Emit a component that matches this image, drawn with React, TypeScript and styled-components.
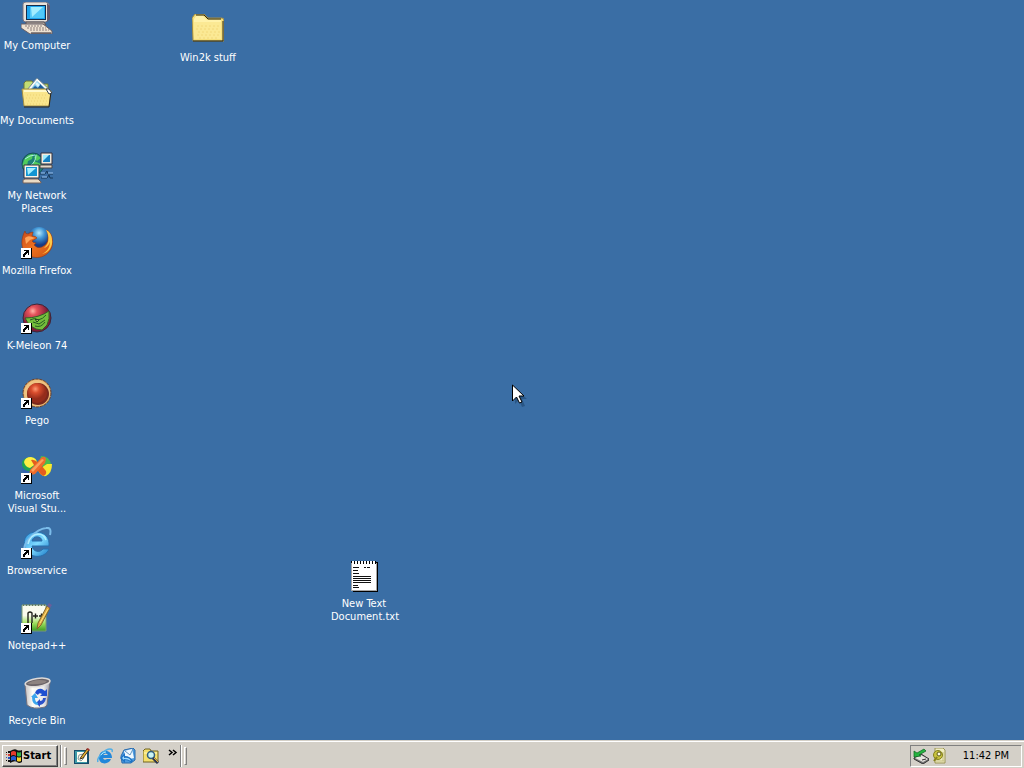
import React from "react";
import styled, { createGlobalStyle } from "styled-components";

const GlobalStyle = createGlobalStyle`
  * { box-sizing: border-box; }
  body {
    margin: 0;
    font-family: Tahoma, "DejaVu Sans Condensed", "DejaVu Sans", sans-serif;
    font-size: 11px;
    line-height: 13px;
  }
`;

const Screen = styled.div`
  display: flex;
  flex-direction: column;
  min-height: 100vh;
  background: #3a6ea5;
`;

const Desktop = styled.main`
  position: relative;
  flex: 1;
  overflow: hidden;
`;

const IconColumn = styled.div`
  display: grid;
  grid-auto-rows: 75px;
  width: 74px;
  padding-top: 2px;
  margin-bottom: -16px;
`;

const Shortcut = styled.button`
  display: flex;
  flex-direction: column;
  align-items: center;
  gap: 5px;
  width: 74px;
  padding: 0;
  border: 0;
  background: none;
  color: #fff;
  font: inherit;
  text-align: center;
  svg { flex: none; display: block; }
`;

const Label = styled.span<{ $narrow?: boolean }>`
  width: ${(p) => (p.$narrow ? "66px" : "auto")};
  white-space: ${(p) => (p.$narrow ? "normal" : "nowrap")};
`;

const Placed = styled.div<{ $x: number; $y: number }>`
  position: absolute;
  left: ${(p) => p.$x}px;
  top: ${(p) => p.$y}px;
`;

const Pointer = styled.svg`
  position: absolute;
  left: 50%;
  top: 384px;
  pointer-events: none;
`;

const Taskbar = styled.footer`
  display: flex;
  align-items: center;
  height: 28px;
  padding: 3px 2px 1px;
  background: #d4d0c8;
  border-top: 1px solid #d4d0c8;
  box-shadow: inset 0 1px #fff;
`;

const StartButton = styled.button`
  display: flex;
  align-items: center;
  gap: 1px;
  width: 56px;
  height: 22px;
  padding: 0 3px;
  border: 1px solid;
  border-color: #fff #404040 #404040 #fff;
  box-shadow: inset -1px -1px #808080;
  background: #d4d0c8;
  color: #000;
  font: inherit;
  font-weight: bold;
  svg { flex: none; }
`;

const Divider = styled.span`
  width: 2px;
  height: 22px;
  margin-left: 2px;
  border-left: 1px solid #808080;
  border-right: 1px solid #fff;
`;

const Grip = styled.span`
  width: 3px;
  height: 18px;
  margin-left: 2px;
  border: 1px solid;
  border-color: #fff #808080 #808080 #fff;
`;

const QuickLaunch = styled.nav`
  display: flex;
  align-items: center;
  gap: 7px;
  margin-left: 7px;
`;

const ToolButton = styled.button`
  display: block;
  width: 16px;
  height: 16px;
  padding: 0;
  border: 0;
  background: none;
  svg { display: block; }
`;

const Chevron = styled.button`
  align-self: flex-start;
  width: 10px;
  height: 12px;
  padding: 4px 0 0;
  margin-left: 9px;
  border: 0;
  background: none;
  svg { display: block; }
`;

const Tray = styled.div`
  display: flex;
  align-items: center;
  height: 22px;
  margin-left: auto;
  padding: 0 12px 0 2px;
  gap: 2px;
  border: 1px solid;
  border-color: #808080 #fff #fff #808080;
`;

const Clock = styled.time`
  margin-left: 14px;
  white-space: nowrap;
`;

type ArtProps = { children: React.ReactNode; size?: number };
const Art = ({ children, size = 32 }: ArtProps) => (
  <svg width={size} height={size} viewBox={`0 0 ${size} ${size}`} aria-hidden="true">
    {children}
  </svg>
);

const ShortcutMark = () => (
  <g shapeRendering="crispEdges">
    <path d="M0 21h11v11H0z" fill="#000" />
    <path d="M0 21h10v10H0z" fill="#fff" />
    <path d="M3 23h5v5h-1v-2h-1v1h-1v1h-1v2h-2v-3h1v-1h1v-1h1v-1h-2z" fill="#000" />
  </g>
);

const ComputerArt = () => (
  <Art>
    <path d="M2 2q0-2 3-2h20l3 2v15l-3 3H5q-3 0-3-3z" fill="#e8e2da" stroke="#77717d" />
    <path d="M26 1l3 3v13l-3 3z" fill="#62596e" />
    <path d="M5 3h20v15H5z" fill="#152b49" />
    <path d="M6 4h18v13H6z" fill="#1da5ef" />
    <path d="M9 5h14v11H9z" fill="#52c8f8" />
    <path d="M10 5h12L11 15z" fill="#a2edff" />
    <path d="M5 20h18l2 3H5z" fill="#b5aaa2" stroke="#5b5557" />
    <path d="M0 22h22l9 7v3H9l-9-6z" fill="#ede2d2" stroke="#655d65" />
    <path d="M4 24h18M6 26h19M9 28h19" stroke="#8d7e7c" strokeDasharray="2 1" />
    <path d="M10 31h20" stroke="#2b252e" />
  </Art>
);

const FolderFront = () => (
  <>
    <path d="M1 12h27l2 2-2 15H3z" fill="#f9e58c" stroke="#a38e42" />
    <path d="M3 14h24" stroke="#fff9ca" strokeWidth="2" />
    <path d="M6 18h20M5 21h21M7 24h19M6 27h20" stroke="#ecd272" strokeDasharray="1 2" />
    <path d="M3 30h25l2-15" fill="none" stroke="#28231c" />
  </>
);

const DocumentsArt = () => (
  <Art>
    <path d="M3 13V6l2-2h6l2 3h14v7" fill="#c2dc73" stroke="#6c773a" />
    <path d="M6 13L16 1l15 14-3 4H9z" fill="#fbfbf6" stroke="#6d8799" />
    <path d="M9 13l7-9 10 9z" fill="#7cc7ea" />
    <path d="M10 13l4-4 3 2 2-4 6 6z" fill="#1f5c9c" />
    <path d="M14 7l2-2 3 3-2 2z" fill="#d8f5ff" />
    <FolderFront />
    <path d="M25 12h3l3 4-3 1z" fill="#fff" stroke="#30404f" />
  </Art>
);

const NetworkArt = () => (
  <Art>
    <circle cx="12" cy="12" r="11" fill="#1d7f78" stroke="#185158" />
    <path d="M3 8q3-6 9-6l-1 5-4 2-1 5-4 2q-1-4 1-8zM13 9l7 3-3 6-6-4zM15 2l5 4-4 3-3-3z" fill="#50cb5b" />
    <path d="M4 7q5-4 10-4M9 14q6-4 6-11" stroke="#a9efe0" fill="none" />
    <path d="M20 1h11v11H20z" fill="#f1ece0" stroke="#34313c" />
    <path d="M22 3h7v7h-7z" fill="#147fc0" /><path d="M22 3h6l-6 6z" fill="#9cecff" />
    <path d="M19 13h12v3H19z" fill="#e3d8c7" stroke="#4b4547" />
    <path d="M3 13h15v13H3z" fill="#f9f4ea" stroke="#34323e" />
    <path d="M5 15h11v9H5z" fill="#1395d3" /><path d="M6 16h9l-8 7z" fill="#a3f0ff" />
    <path d="M4 27h13l3 3v1H2v-3z" fill="#eadbc4" stroke="#75615b" />
    <path d="M19 22h5l2-3 1 3h5M20 26h6l2-3 1 3h3" fill="none" stroke="#17385a" />
    <path d="M20 21h4M27 21h5M21 25h5" stroke="#9ac5f3" />
  </Art>
);

const FirefoxArt = () => (
  <Art>
    <defs>
      <radialGradient id="globe" cx="50%" cy="25%"><stop stopColor="#b4e8fc" /><stop offset=".45" stopColor="#4297d6" /><stop offset="1" stopColor="#173b85" /></radialGradient>
      <linearGradient id="fox" x1="0" y1="0" x2="1" y2="1"><stop stopColor="#c64a1c" /><stop offset=".5" stopColor="#ed7120" /><stop offset="1" stopColor="#c9500f" /></linearGradient>
    </defs>
    <circle cx="18" cy="12" r="12" fill="url(#globe)" />
    <path d="M4 4q0 3 3 3 3-2 5-2l-1 4q4 0 5 2l-5 3q1 2 4 2l-2 2q3 4 8 2 9-4 5-17c6 4 7 13 4 19-6 11-21 11-27 2C0 19 0 11 4 4z" fill="url(#fox)" stroke="#943714" strokeWidth=".6" />
    <path d="M25 3c4 7 3 14-2 18 4-1 6-6 6-6s0 9-8 12c7-1 11-8 10-14 0-5-3-9-6-10z" fill="#ffc847" />
    <path d="M4 11q3-3 7-1l3 1-5 2-4 4z" fill="#ffa45a" />
    <ShortcutMark />
  </Art>
);

const MeleonArt = () => (
  <Art>
    <defs><radialGradient id="melon" cx="35%" cy="25%"><stop stopColor="#ffb4a8" /><stop offset=".3" stopColor="#e4525b" /><stop offset="1" stopColor="#821b38" /></radialGradient></defs>
    <circle cx="16" cy="16" r="14" fill="url(#melon)" stroke="#3b2739" />
    <path d="M4 16q14 0 24-7 1 8-2 14l-5 5-6-1q-7-3-11-11z" fill="#74bd3c" stroke="#345e28" />
    <path d="M9 18q5-3 8 0 5-1 8-5M14 24q6 2 10-4M12 20l6 2 6-4" fill="none" stroke="#285b24" />
    <path d="M14 17l4 1-2 2z" fill="#b4e85b" stroke="#1d401f" />
    <ShortcutMark />
  </Art>
);

const PegoArt = () => (
  <Art>
    <defs><radialGradient id="pego" cx="42%" cy="30%"><stop stopColor="#ff9872" /><stop offset=".4" stopColor="#d94d2d" /><stop offset="1" stopColor="#942c1b" /></radialGradient></defs>
    <circle cx="16" cy="16" r="14" fill="#dba760" stroke="#653e31" strokeDasharray="3 1" />
    <circle cx="16" cy="16" r="13" fill="#efc281" />
    <circle cx="17" cy="17" r="11" fill="#79281d" />
    <circle cx="16" cy="16" r="10" fill="url(#pego)" />
    <ShortcutMark />
  </Art>
);

const StudioArt = () => (
  <Art>
    <path d="M1 13q-1-7 8-8 6 0 8 6l-3 10q-12 2-13-8z" fill="#23a255" />
    <path d="M3 10q1-5 7-5 6 1 6 6l-7 5q-5-1-6-6z" fill="#fff044" />
    <path d="M20 4q8 0 10 8l-3 5-9-4z" fill="#4abc4d" />
    <path d="M17 18l9-6h5q0 9-6 12-5 1-8-6z" fill="#f9e72e" />
    <path d="M1 14q2 5 8 5l-2 4q-6-1-6-9z" fill="#3566b0" />
    <path d="M10 8q5-2 15 11 1 4-3 5-4-2-12-16z" fill="#e45d1e" />
    <path d="M9 18L20 6q4-3 5 1l-1 4-10 11q-7 2-5-4z" fill="#ee6b2b" />
    <path d="M10 18L21 7l2 1-11 12z" fill="#fca05c" />
    <ShortcutMark />
  </Art>
);

const BrowserArt = () => (
  <Art>
    <defs><linearGradient id="ie" x2="1" y2="1"><stop stopColor="#2d92dc" /><stop offset=".5" stopColor="#7edaff" /><stop offset="1" stopColor="#1a79c6" /></linearGradient></defs>
    <path fillRule="evenodd" d="M28 19H11c1 6 8 7 11 3h6C24 32 8 32 4 21 1 11 7 5 15 5c9 0 14 6 13 14zM11 14h10c0-5-9-6-10 0z" fill="url(#ie)" stroke="#276fae" />
    <path d="M4 25C0 16 16 2 25 1q6-1 4 7" fill="none" stroke="#7bbcea" strokeWidth="2" />
    <path d="M7 17Q9 8 17 7q6 0 8 6" fill="none" stroke="#b2eeff" strokeWidth="1.5" />
    <ShortcutMark />
  </Art>
);

const NotepadPlusArt = () => (
  <Art>
    <defs><linearGradient id="paper" x2="0" y2="1"><stop offset=".4" stopColor="#fafbee" /><stop offset=".7" stopColor="#9fe05d" /><stop offset="1" stopColor="#3c9c22" /></linearGradient></defs>
    <path d="M1 3h24v26H1z" fill="url(#paper)" stroke="#7b9a74" />
    <path d="M2 3h22" stroke="#627967" strokeWidth="2" strokeDasharray="1 2" />
    <path d="M7 22V11q2-2 4 0v10M12 14h5M14.500 11.500v5M18 14h5M20.500 11.500v5" fill="none" stroke="#20211a" strokeWidth="1.400" />
    <path d="M26 4l3 2-9 17-4 4 1-6z" fill="#e0aa43" stroke="#80672c" />
    <path d="M26 4l2-3 3 2-2 3z" fill="#695f9c" />
    <path d="M27 7l-8 14" stroke="#ffe282" />
    <ShortcutMark />
  </Art>
);

const RecycleArt = () => (
  <Art>
    <defs><linearGradient id="bin" x2="1" y2="0"><stop stopColor="#c4bfc0" /><stop offset=".3" stopColor="#fcfcf6" /><stop offset=".75" stopColor="#e9e9ea" /><stop offset="1" stopColor="#9a9caa" /></linearGradient></defs>
    <path d="M4 8l2 20q6 5 18 2l2-2 3-23z" fill="url(#bin)" stroke="#74717c" />
    <ellipse cx="16.5" cy="5.5" rx="12.5" ry="4" fill="#6b6468" stroke="#dedad7" strokeWidth="1.5" transform="rotate(-8 16 5)" />
    <path d="M6 7Q14 1 26 4q-3 4-20 3z" fill="#8d8380" />
    <path d="M14 16q2-5 7-4l3 2 2-2v7h-7l2-2q-3-2-4 1z" fill="#1e4fd1" />
    <path d="M25 21q-1 6-6 7v2l-4-4 4-4v2q3 0 3-3z" fill="#2b52ca" />
    <path d="M10 20l4-4 3 5h-3q0 4 3 5v2q-6 0-6-8z" fill="#3ba6ed" />
  </Art>
);

const FolderArt = () => (
  <Art>
    <path d="M0 4l3-4h9l4 4h14q2 0 2 3v20H1z" fill="#f5df7b" stroke="#a08b45" />
    <path d="M2 5l2-3h7l4 4h14v2H2z" fill="#fff2aa" />
    <path d="M2 8h27v17H2z" fill="#fbe994" />
    <path d="M5 12h23M4 15h24M6 18h22M5 21h23M7 24h20" stroke="#f2d87b" strokeDasharray="2 2" />
    <path d="M1 27h30V7M4 1h8l4 4h13" fill="none" stroke="#292619" />
  </Art>
);

const TextArt = () => (
  <Art>
    <g shapeRendering="crispEdges">
      <path d="M5 2h25v30H5z" fill="#000" /><path d="M3 1h25v29H3z" fill="#fff" />
      <path d="M3 2h25" stroke="#000" strokeWidth="3" strokeDasharray="1 2" />
      <path d="M3 3v27h25V3" fill="none" stroke="#a6a6a6" />
      <path d="M5 7h6v1H5zM16 7h2v1h-2zM19 7h3v1h-3zM5 10h5v1H5zM5 13h6v1H5zM5 16h18v1H5zM5 18h18v1H5zM5 20h18v1H5zM5 22h18v1H5zM5 25h5v1H5zM5 27h6v1H5z" fill="#111" />
    </g>
  </Art>
);

const WindowsLogo = () => (
  <Art size={16}>
    <path d="M4 3q5-3 7-1 2 1 5 0v12q-3 2-5 0-2-2-7 1z" fill="#111" />
    <path d="M5 4q3-2 5 0v4q-3-2-5 0z" fill="#e63b2c" />
    <path d="M11 4q2 1 4 0v4q-2 1-4 0z" fill="#31b34b" />
    <path d="M5 9q3-2 5 0v4q-3-2-5 0z" fill="#275bd2" />
    <path d="M11 9q2 1 4 0v4q-2 1-4 0z" fill="#f9d52e" />
    <path d="M0 4h1v1H0zM2 3h2v2H2zM0 12h1v1H0zM2 12h2v2H2z" fill="#111" />
    <path d="M0 6h1v1H0zM2 6h2v2H2z" fill="#d93e32" /><path d="M0 9h1v1H0zM2 9h2v2H2z" fill="#2750bb" />
  </Art>
);

const ShowDesktopArt = () => (
  <Art size={16}>
    <path d="M0 2h15v14H0z" fill="#164d6b" /><path d="M1 3h12v12H1z" fill="#3d9aa8" />
    <path d="M3 4h10v10H3z" fill="#fffdf1" /><path d="M5 7l4-1 1 4-3 3-3-2z" fill="none" stroke="#81979b" />
    <path d="M7 9l6-8 2 1-6 8-3 1z" fill="#e8b52b" stroke="#42301f" /><path d="M12 1l2-1 2 2-1 1z" fill="#a2342e" />
  </Art>
);

const SmallBrowserArt = () => (
  <Art size={16}>
    <path fillRule="evenodd" d="M15 10H6q1 3 4 1h4c-2 6-12 6-12-1C2 0 15 1 15 10zM6 7h5q-2-3-5 0z" fill="#2187da" />
    <path d="M1 14C-1 10 8 1 13 1q3 0 2 3" fill="none" stroke="#51afe6" strokeWidth="1.5" />
    <path d="M4 7q2-3 5-3" fill="none" stroke="#a2e9ff" />
  </Art>
);

const MailArt = () => (
  <Art size={16}>
    <path d="M4 2l9-2 2 2v10l-4 3H2L1 8z" fill="#4d9be0" stroke="#2b6bac" />
    <path d="M4 3l8-2 2 9-8 2z" fill="#eff8ff" /><path d="M5 3l5 4 3-6" fill="none" stroke="#6194c1" />
    <path d="M0 10l5-5v3q5 0 8 5l-2 2q-2-3-6-3v3z" fill="#1d73c5" /><path d="M2 10l2-2v2q5-1 7 3-3-2-7-2v1z" fill="#9fdcff" />
  </Art>
);

const SearchFolderArt = () => (
  <Art size={16}>
    <path d="M0 3l2-2h5l1 2h7v11H0z" fill="#f5df6c" stroke="#6f6222" />
    <path d="M1 5h13" stroke="#fff9be" />
    <circle cx="8" cy="7" r="3.5" fill="#c9f4f5" stroke="#315d7d" strokeWidth="1.5" />
    <path d="M10 10l5 5" stroke="#2d3750" strokeWidth="3" /><path d="M11 10l4 4" stroke="#efb330" />
  </Art>
);

const EjectArt = () => (
  <Art size={16}>
    <path d="M1 10l7-4 8 5v1l-6 4-9-5z" fill="#777" stroke="#333" />
    <path d="M2 10l6-3 7 4-5 3z" fill="#e7e4df" /><path d="M9 12l4-1" stroke="#333" />
    <path d="M1 3v6l7-1-2-1 7-4-2-2-7 4z" fill="#25b340" stroke="#0b641f" strokeWidth=".7" />
  </Art>
);

const NoticeArt = () => (
  <Art size={16}>
    <path d="M4 0h8l2 2v13H4z" fill="#f0edc2" stroke="#999354" />
    <path d="M5 13h8M12 4v9" stroke="#c3bd80" />
    <circle cx="7" cy="7" r="4.5" fill="#c8c23e" stroke="#85821d" />
    <circle cx="8" cy="6" r="2" fill="#fffce0" stroke="#5d5a19" /><path d="M6 9l-3 4" stroke="#88821c" strokeWidth="2" />
  </Art>
);

const shortcuts = [
  { name: "My Computer", Icon: ComputerArt },
  { name: "My Documents", Icon: DocumentsArt },
  { name: "My Network Places", Icon: NetworkArt, narrow: true },
  { name: "Mozilla Firefox", Icon: FirefoxArt },
  { name: "K-Meleon 74", Icon: MeleonArt },
  { name: "Pego", Icon: PegoArt },
  { name: "Microsoft Visual Stu...", Icon: StudioArt, narrow: true },
  { name: "Browservice", Icon: BrowserArt },
  { name: "Notepad++", Icon: NotepadPlusArt },
  { name: "Recycle Bin", Icon: RecycleArt },
];

const tools = [
  { name: "Show Desktop", Icon: ShowDesktopArt },
  { name: "Launch Browser", Icon: SmallBrowserArt },
  { name: "Launch Mail", Icon: MailArt },
  { name: "Search", Icon: SearchFolderArt },
];

type ItemProps = { name: string; Icon: React.ComponentType; narrow?: boolean };
const DesktopItem = ({ name, Icon, narrow }: ItemProps) => (
  <Shortcut type="button">
    <Icon />
    <Label $narrow={narrow}>{name}</Label>
  </Shortcut>
);

export default function App() {
  return (
    <Screen>
      <GlobalStyle />
      <Desktop>
        <IconColumn>
          {shortcuts.map((s) => <DesktopItem key={s.name} {...s} />)}
        </IconColumn>
        <Placed $x={171} $y={14}><DesktopItem name="Win2k stuff" Icon={FolderArt} /></Placed>
        <Placed $x={327} $y={560}><DesktopItem name="New Text Document.txt" Icon={TextArt} narrow /></Placed>
        <Pointer width="18" height="24" viewBox="0 0 18 24" aria-hidden="true">
          <path d="M3 4v16l4-4 3 7 3-1-3-7h5z" fill="#173a60" opacity=".45" />
          <path d="M.5 1v16l4-4 3 6 2.500-1-3-6h5z" fill="#fff" stroke="#000" />
        </Pointer>
      </Desktop>
      <Taskbar>
        <StartButton type="button"><WindowsLogo />Start</StartButton>
        <Divider /><Grip />
        <QuickLaunch aria-label="Quick Launch">
          {tools.map(({ name, Icon }) => (
            <ToolButton key={name} type="button" aria-label={name}><Icon /></ToolButton>
          ))}
        </QuickLaunch>
        <Chevron type="button" aria-label="More">
          <svg width="10" height="7" viewBox="0 0 10 7" aria-hidden="true"><path d="M1 1l3 2.500-3 2.500M5 1l3 2.500-3 2.500" fill="none" stroke="#000" strokeWidth="1.500" /></svg>
        </Chevron>
        <Divider /><Grip />
        <Tray><EjectArt /><NoticeArt /><Clock>11:42 PM</Clock></Tray>
      </Taskbar>
    </Screen>
  );
}
